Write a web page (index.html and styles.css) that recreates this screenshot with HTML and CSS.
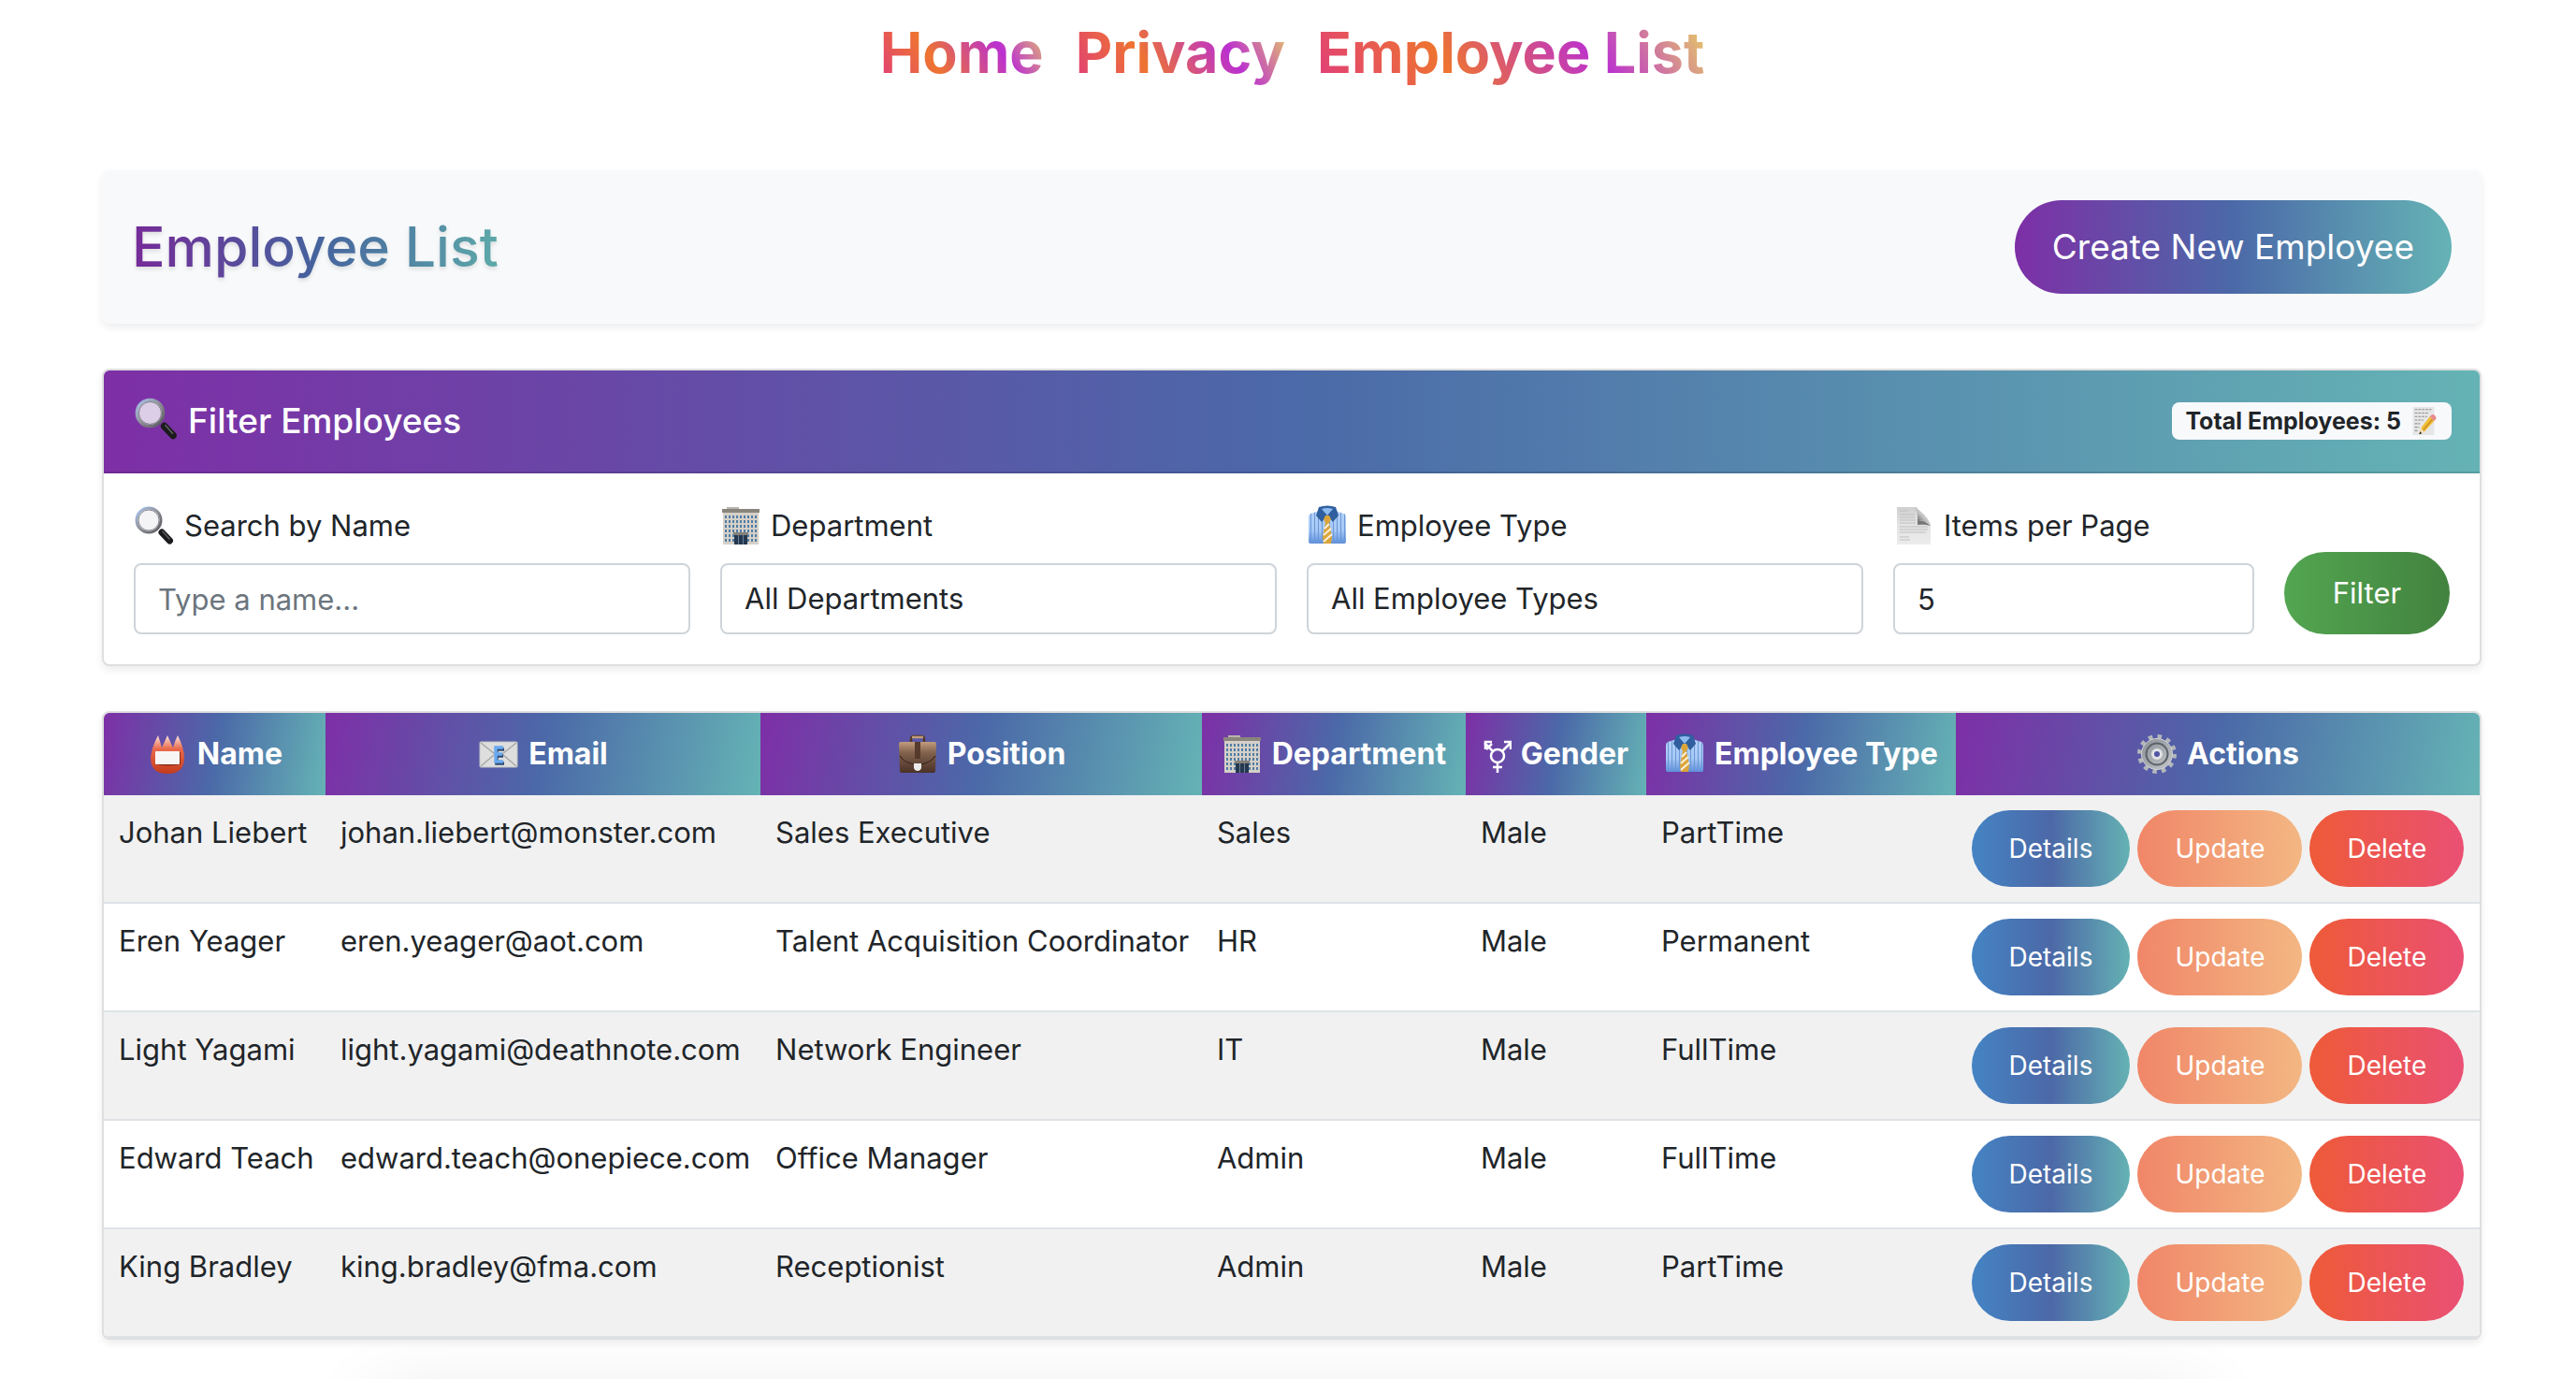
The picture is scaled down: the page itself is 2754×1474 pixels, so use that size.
FILE: index.html
```html
<!DOCTYPE html>
<html lang="en">
<head>
<meta charset="utf-8">
<meta name="viewport" content="width=device-width, initial-scale=1">
<title>Employee List</title>
<link rel="stylesheet" href="styles.css">
</head>
<body>
<svg class="sprite" aria-hidden="true">
  <defs>
    <linearGradient id="g-rim" x1="0" y1="0" x2="1" y2="1"><stop offset="0" stop-color="#a9c4f0"/><stop offset=".5" stop-color="#8d8f96"/><stop offset="1" stop-color="#55565a"/></linearGradient>
    <linearGradient id="g-shirt" x1="0" y1="0" x2="0" y2="1"><stop offset="0" stop-color="#b4d2fa"/><stop offset=".6" stop-color="#a5c8f6"/><stop offset="1" stop-color="#5c8fdc"/></linearGradient>
    <linearGradient id="g-case" x1="0" y1="0" x2="0" y2="1"><stop offset="0" stop-color="#c09c7c"/><stop offset=".35" stop-color="#82624d"/><stop offset="1" stop-color="#4a3127"/></linearGradient>
    <linearGradient id="g-badge" x1="0" y1="0" x2="0" y2="1"><stop offset="0" stop-color="#fbe6df"/><stop offset=".35" stop-color="#ea6a4c"/><stop offset="1" stop-color="#c43a1c"/></linearGradient>
    <linearGradient id="g-page" x1="0" y1="0" x2="0" y2="1"><stop offset="0" stop-color="#cfcfcf"/><stop offset=".4" stop-color="#e2e2e2"/><stop offset="1" stop-color="#ececec"/></linearGradient>
    <linearGradient id="g-fold" x1="1" y1="0" x2="0" y2="1"><stop offset="0" stop-color="#ffffff"/><stop offset=".5" stop-color="#c4c4c4"/><stop offset="1" stop-color="#303030"/></linearGradient>
    <linearGradient id="g-gear" x1="0" y1="0" x2="1" y2="1"><stop offset="0" stop-color="#8a9096"/><stop offset="1" stop-color="#c3c6c9"/></linearGradient>
    <pattern id="p-windows" width="4" height="5" patternUnits="userSpaceOnUse"><rect width="4" height="5" fill="#d5d0c8"/><rect x="1" y="1" width="2" height="3" fill="#4f7da6"/></pattern>
    <pattern id="p-stripes" width="4" height="4" patternUnits="userSpaceOnUse"><rect width="1" height="4" fill="#6d97d4"/></pattern>
  </defs>
  <symbol id="i-search" viewBox="0 0 44 44">
    <path d="M28 27l11 11" stroke="#77787c" stroke-width="4"/>
    <path d="M30 29l8.500 9" stroke="#1b1b1d" stroke-width="7" stroke-linecap="round"/>
    <path d="M31 28l7 8" stroke="#5c5d61" stroke-width="1.500" stroke-linecap="round"/>
    <circle cx="16" cy="16" r="13" fill="#f2f2f4" fill-opacity=".82" stroke="url(#g-rim)" stroke-width="3"/>
    <circle cx="16" cy="16" r="11" fill="none" stroke="#6c6e74" stroke-width=".8"/>
  </symbol>
  <symbol id="i-building" viewBox="0 0 44 44">
    <rect x="7" y="2" width="13" height="4" fill="#b9b5ae"/>
    <rect x="3" y="7" width="38" height="35" fill="#d5d0c8"/>
    <rect x="4" y="9" width="36" height="31" fill="url(#p-windows)"/>
    <rect x="2" y="4" width="40" height="4" fill="#8a857c"/>
    <rect x="14" y="29" width="16" height="3" fill="#85817a"/>
    <rect x="15" y="32" width="14" height="10" fill="#24384f"/>
    <path d="M19.500 32v10M24.500 32v10" stroke="#6d7f92"/>
  </symbol>
  <symbol id="i-shirt" viewBox="0 0 44 44">
    <path d="M4 9L14 6h16l10 3q2 1 2 4v26q0 2-2 2H4q-2 0-2-2V13q0-3 2-4z" fill="url(#g-shirt)"/>
    <path d="M4 9L14 6h16l10 3q2 1 2 4v26q0 2-2 2H4q-2 0-2-2V13q0-3 2-4z" fill="url(#p-stripes)"/>
    <path d="M13 2q9-3 18 0l3 9-6 7-6-7-6 7-6-7z" fill="#2f5f9e"/>
    <path d="M16 4q6-2 12 0l-6 7z" fill="#8fbcf0"/>
    <path d="M20 11h4l2 4-2 4 3 15-1 7h-8l-1-7 3-15-2-4z" fill="#dba53a"/>
    <path d="M19 25l5-5M18 32l8-7M18 39l9-8" stroke="#fbf1d8" stroke-width="2"/>
  </symbol>
  <symbol id="i-page" viewBox="0 0 44 44">
    <path d="M4 2h21l15 18v22H4z" fill="url(#g-page)"/>
    <path d="M7 6h9M7 10h16M7 13h16M7 16h17M7 19h17M7 23h30M7 26h30M7 29h28M7 34h10M7 37h11" stroke="#c0c0c0" stroke-width="1.200"/>
    <path d="M22 2q5 4 4 14 8 0 14 5-4-12-18-19z" fill="url(#g-fold)"/>
    <path d="M26 16v5q8-1 14 1-6-6-14-6z" fill="#777"/>
  </symbol>
  <symbol id="i-memo" viewBox="0 0 30 36">
    <path d="M2 2h24v32H2z" fill="#e6e6e6"/>
    <path d="M4 5h19M4 9h16M4 13h14M4 17h10M4 21h6M4 25h5M4 29h4" stroke="#8f8f8f" stroke-width="1.200" stroke-dasharray="3 1"/>
    <path d="M9 33l2-7L21 13l5 5-11 12z" fill="#f1bd35"/>
    <path d="M13 29L24 16" stroke="#c98a1d" stroke-width="1.500"/>
    <path d="M21 13l2-2q2-1 4 1t1 4l-2 2z" fill="#e88a8f"/>
    <path d="M9 33l2-7 4 4z" fill="#f3ddb4"/><path d="M9 33l1-3 2 2z" fill="#222"/>
  </symbol>
  <symbol id="i-badge" viewBox="0 0 44 44">
    <path d="M12 2q2 6 4 13 3-6 6-13 3 7 6 13 2-7 5-13 7 14 7 24 0 17-18 17T4 26Q5 15 12 2z" fill="url(#g-badge)"/>
    <path d="M9 20h27v13q-13 3-27 0z" fill="#8e2a14"/>
    <rect x="9" y="19" width="26" height="14" rx="1" fill="#f7f6f4"/>
  </symbol>
  <symbol id="i-mail" viewBox="0 0 44 44">
    <rect x="2" y="9" width="40" height="27" rx="1" fill="#dedede" stroke="#c4c4c4"/>
    <path d="M3 10l19 15 19-15M3 35l14-12M41 35L27 23" fill="none" stroke="#a8a8a8" stroke-width="1.500"/>
    <path d="M27 15h-8v15h8M19 22h7" transform="translate(1 2)" fill="none" stroke="#2c4a70" stroke-width="3.500"/>
    <path d="M27 15h-8v15h8M19 22h7" fill="none" stroke="#69a9ef" stroke-width="3.500"/>
  </symbol>
  <symbol id="i-case" viewBox="0 0 44 44">
    <path d="M15 10V6q0-3 3-3h8q3 0 3 3v4" fill="none" stroke="#54382a" stroke-width="2.500"/>
    <path d="M16 4h12" stroke="#c09c7c" stroke-width="2.500"/>
    <path d="M4 9h36q2 0 2 2l-1 29q0 2-2 2H5q-2 0-2-2L2 11q0-2 2-2z" fill="url(#g-case)"/>
    <path d="M3 24q6 9 19 9t19-9" fill="none" stroke="#3c261d" stroke-width="1.200"/>
    <rect x="19" y="9" width="6" height="18" fill="#563b2d"/>
    <path d="M18 32h8v5q-1 3-4 3t-4-3z" fill="#ececec"/>
  </symbol>
  <symbol id="i-gender" viewBox="0 0 30 44">
    <g fill="none" stroke="#fff" stroke-width="2.500">
      <circle cx="15" cy="24" r="7"/>
      <path d="M15 31v11M10 36h10M20 19l9-9M22 9h7v8M10 19L1 10M2 17V9h7M3 17l6-6"/>
    </g>
  </symbol>
  <symbol id="i-gear" viewBox="0 0 44 44">
    <circle cx="22" cy="22" r="18.500" fill="none" stroke="#b3b7ba" stroke-width="5" stroke-dasharray="4.500 5.186"/>
    <circle cx="22" cy="22" r="16.500" fill="url(#g-gear)" stroke="#d0d2d4"/>
    <circle cx="22" cy="22" r="11.500" fill="none" stroke="#5d6469" stroke-width="2"/>
    <circle cx="22" cy="22" r="4.500" fill="#5153a5" stroke="#e0e2e4" stroke-width="3"/>
  </symbol>
</svg>

<header>
  <nav class="topnav">
    <a href="#">Home</a>
    <a href="#">Privacy</a>
    <a href="#">Employee List</a>
  </nav>
</header>

<main class="content">
  <section class="title-bar">
    <h1>Employee List</h1>
    <button type="button" class="btn btn-create">Create New Employee</button>
  </section>

  <section class="card">
    <div class="card-header">
      <h2><svg class="icon icon-lg"><use href="#i-search"/></svg>Filter Employees</h2>
      <span class="badge">Total Employees: 5 <svg class="icon-memo"><use href="#i-memo"/></svg></span>
    </div>
    <form class="filters">
      <div class="field wide">
        <label for="name"><svg class="icon"><use href="#i-search"/></svg>Search by Name</label>
        <input id="name" type="text" placeholder="Type a name...">
      </div>
      <div class="field wide">
        <label for="dept"><svg class="icon"><use href="#i-building"/></svg>Department</label>
        <select id="dept"><option>All Departments</option></select>
      </div>
      <div class="field wide">
        <label for="type"><svg class="icon"><use href="#i-shirt"/></svg>Employee Type</label>
        <select id="type"><option>All Employee Types</option></select>
      </div>
      <div class="field medium">
        <label for="size"><svg class="icon"><use href="#i-page"/></svg>Items per Page</label>
        <input id="size" type="number" value="5">
      </div>
      <button type="button" class="btn btn-filter">Filter</button>
    </form>
  </section>

  <section class="card">
    <table>
      <colgroup><col class="c-name"><col class="c-email"><col class="c-position"><col class="c-dept"><col class="c-gender"><col class="c-type"><col class="c-actions"></colgroup>
      <thead>
        <tr>
          <th><svg class="icon"><use href="#i-badge"/></svg>Name</th>
          <th><svg class="icon"><use href="#i-mail"/></svg>Email</th>
          <th><svg class="icon"><use href="#i-case"/></svg>Position</th>
          <th><svg class="icon"><use href="#i-building"/></svg>Department</th>
          <th><svg class="icon icon-narrow"><use href="#i-gender"/></svg>Gender</th>
          <th><svg class="icon"><use href="#i-shirt"/></svg>Employee Type</th>
          <th><svg class="icon"><use href="#i-gear"/></svg>Actions</th>
        </tr>
      </thead>
      <tbody>
        <tr><td>Johan Liebert</td><td>johan.liebert@monster.com</td><td>Sales Executive</td><td>Sales</td><td>Male</td><td>PartTime</td>
          <td><div class="actions"><button type="button" class="btn btn-details">Details</button><button type="button" class="btn btn-update">Update</button><button type="button" class="btn btn-delete">Delete</button></div></td></tr>
        <tr><td>Eren Yeager</td><td>eren.yeager@aot.com</td><td>Talent Acquisition Coordinator</td><td>HR</td><td>Male</td><td>Permanent</td>
          <td><div class="actions"><button type="button" class="btn btn-details">Details</button><button type="button" class="btn btn-update">Update</button><button type="button" class="btn btn-delete">Delete</button></div></td></tr>
        <tr><td>Light Yagami</td><td>light.yagami@deathnote.com</td><td>Network Engineer</td><td>IT</td><td>Male</td><td>FullTime</td>
          <td><div class="actions"><button type="button" class="btn btn-details">Details</button><button type="button" class="btn btn-update">Update</button><button type="button" class="btn btn-delete">Delete</button></div></td></tr>
        <tr><td>Edward Teach</td><td>edward.teach@onepiece.com</td><td>Office Manager</td><td>Admin</td><td>Male</td><td>FullTime</td>
          <td><div class="actions"><button type="button" class="btn btn-details">Details</button><button type="button" class="btn btn-update">Update</button><button type="button" class="btn btn-delete">Delete</button></div></td></tr>
        <tr><td>King Bradley</td><td>king.bradley@fma.com</td><td>Receptionist</td><td>Admin</td><td>Male</td><td>PartTime</td>
          <td><div class="actions"><button type="button" class="btn btn-details">Details</button><button type="button" class="btn btn-update">Update</button><button type="button" class="btn btn-delete">Delete</button></div></td></tr>
      </tbody>
    </table>
  </section>
</main>
<footer class="footer"></footer>
</body>
</html>
```
FILE: styles.css
```css
:root {
  --ink: #212529;
  --brand: #7e2fa6, #4b69a8 50%, #65b3b5;
}

* { box-sizing: border-box; }

html { scrollbar-width: none; }

body {
  margin: 0;
  background: #fff;
  color: var(--ink);
  font: 400 31px/48px Inter, "Liberation Sans", sans-serif;
}

button, input, select { font: inherit; color: inherit; }

.sprite { display: block; width: 0; height: 0; }

.topnav {
  display: flex;
  justify-content: center;
  gap: 34px;
  height: 182px;
  padding: 20px 100px 0 109px;
}

.topnav a {
  height: 72px;
  font-size: 61px;
  font-weight: 700;
  line-height: 72px;
  text-decoration: none;
  color: transparent;
  background: linear-gradient(60deg, #e03c7a, #ee7430 33%, #bb30d0 70%, #e8cf62);
  -webkit-background-clip: text;
  background-clip: text;
}

.content {
  display: flex;
  flex-direction: column;
  gap: 48px;
  padding: 0 101px 0 109px;
}

.title-bar {
  display: flex;
  align-items: center;
  justify-content: space-between;
  padding: 32px;
  background: #f8f9fb;
  border-radius: 8px;
  box-shadow: 0 4px 8px rgba(0, 0, 0, .075);
}

h1, h2 { margin: 0; font-weight: 500; }

h1 {
  font-size: 59px;
  line-height: 76px;
  color: transparent;
  background: linear-gradient(to right, #762a98, #45629d 50%, #5da9a9);
  -webkit-background-clip: text;
  background-clip: text;
  filter: drop-shadow(0 3px 2px rgba(0, 0, 0, .1));
}

.btn {
  border: 0;
  border-radius: 50px;
  padding: 0;
  color: #fff;
  text-align: center;
  cursor: pointer;
}

.btn-create {
  padding: 20px 40px;
  font-size: 37px;
  line-height: 60px;
  background: linear-gradient(to right, var(--brand));
}

.card {
  overflow: hidden;
  border: 2px solid #dfdfdf;
  border-radius: 8px;
  background: #fff;
  box-shadow: 0 4px 8px rgba(0, 0, 0, .075);
}

.card-header {
  display: flex;
  align-items: center;
  justify-content: space-between;
  height: 110px;
  padding: 0 30px 0 32px;
  color: #fff;
  background: linear-gradient(to right, var(--brand));
  border-bottom: 2px solid rgba(0, 0, 0, .125);
}

h2 { display: flex; align-items: center; font-size: 37px; }

.icon {
  width: 44px;
  height: 44px;
  margin: -4px 10px 0 0;
  vertical-align: middle;
}

.icon-lg { width: 48px; height: 48px; }
.icon-narrow { width: 30px; }

.badge {
  display: flex;
  align-items: center;
  gap: 10px;
  padding: 0 14px;
  border-radius: 8px;
  background: #f8f9fb;
  color: var(--ink);
  font-size: 25px;
  font-weight: 700;
  line-height: 40px;
}

.icon-memo { width: 30px; height: 34px; }

.filters {
  display: grid;
  grid-template-columns: repeat(12, 1fr);
  align-items: end;
  gap: 32px;
  padding: 32px;
}

.field { display: flex; flex-direction: column; gap: 16px; }
.wide { grid-column: span 3; }
.medium { grid-column: span 2; }

.field label { display: flex; align-items: center; }
.field .icon { margin-top: 0; }

.field input,
.field select {
  width: 100%;
  height: 76px;
  padding: 0 24px;
  border: 2px solid #ced4da;
  border-radius: 8px;
  background: #fff;
  appearance: none;
}

.field input[type="number"] { appearance: textfield; }
.field input::placeholder { color: #6c757d; opacity: 1; }

.btn-filter {
  height: 88px;
  background: linear-gradient(to right, #53a651, #42823f);
}

table {
  width: 100%;
  border-collapse: separate;
  border-spacing: 0;
  table-layout: fixed;
}

.c-name { width: 9.33%; }
.c-email { width: 18.31%; }
.c-position { width: 18.58%; }
.c-dept { width: 11.1%; }
.c-gender { width: 7.6%; }
.c-type { width: 13.03%; }

th {
  height: 88px;
  padding: 0;
  color: #fff;
  font-size: 32px;
  font-weight: 700;
  white-space: nowrap;
  background: linear-gradient(100deg, var(--brand));
}

td {
  padding: 16px;
  vertical-align: top;
  white-space: nowrap;
  border-bottom: 2px solid #dee2e6;
}

tbody tr:nth-child(odd) { background: #f1f1f1; }

.actions { display: flex; justify-content: center; gap: 8px; }

.actions .btn {
  height: 82px;
  padding: 0 40px;
  font-size: 28px;
}

.btn-details { background: linear-gradient(to right, #4484c4, #4c68a7 50%, #65b2b4); }
.btn-update { background: linear-gradient(to right, #f08668, #f3b783); }
.btn-delete { background: linear-gradient(to right, #ee5a38, #ea5073); }

.footer {
  width: 71%;
  height: 96px;
  margin: 60px auto 0;
  background: #fff;
  box-shadow: 0 0 80px rgba(0, 0, 0, .1);
}
```
